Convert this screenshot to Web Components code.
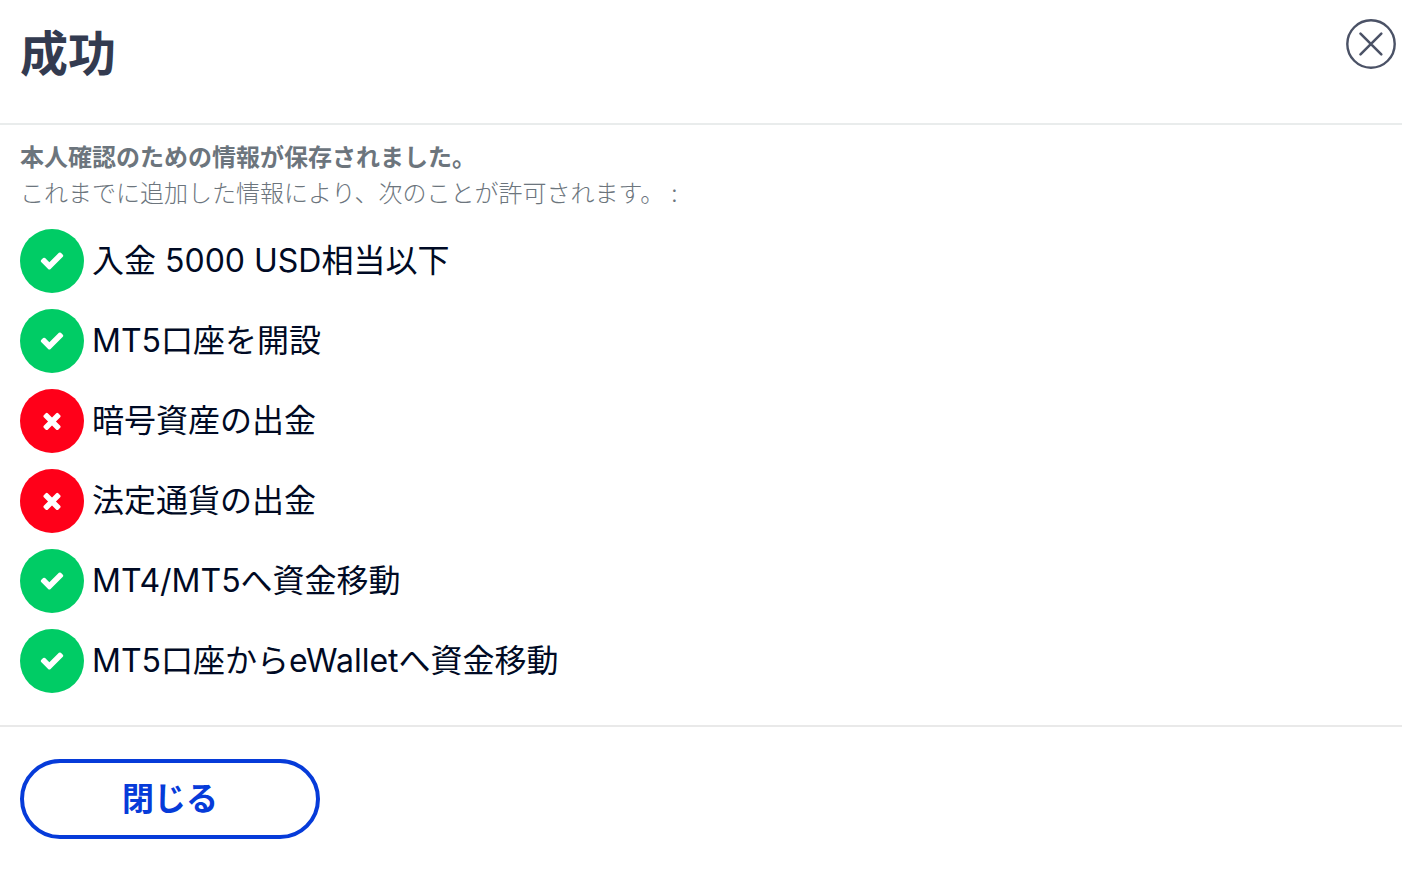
<!DOCTYPE html>
<html lang="ja">
<head>
<meta charset="utf-8">
<meta name="viewport" content="width=device-width, initial-scale=1">
<title>成功</title>
<style>
    body {
        margin: 0;
        background: #fff;
        font-family: Inter, "Noto Sans CJK JP", sans-serif;
    }
    strong {
        font-weight: 700;
    }
</style>
</head>
<body>

<result-dialog>
    <span slot="title">成功</span>
    <strong slot="summary">本人確認のための情報が保存されました。</strong>
    <span slot="detail">これまでに追加した情報により、次のことが許可されます。 :</span>
    <permission-item status="allowed">入金 5000 USD相当以下</permission-item>
    <permission-item status="allowed">MT5口座を開設</permission-item>
    <permission-item status="denied">暗号資産の出金</permission-item>
    <permission-item status="denied">法定通貨の出金</permission-item>
    <permission-item status="allowed">MT4/MT5へ資金移動</permission-item>
    <permission-item status="allowed">MT5口座からeWalletへ資金移動</permission-item>
    <pill-button slot="actions">閉じる</pill-button>
</result-dialog>

<script>
const dialogTemplate = document.createElement('template');
dialogTemplate.innerHTML = `
<style>
    :host {
        display: block;
    }
    header {
        display: flex;
        justify-content: space-between;
        align-items: flex-start;
        padding: 18px 4px 33px 20px;
        border-bottom: 2px solid #e9ecec;
    }
    h1 {
        margin: 0;
        font-size: 48px;
        line-height: 72px;
        font-weight: 700;
        color: #333b50;
    }
    .message {
        margin: 0;
        padding: 15px 20px 0;
        font-size: 24px;
        line-height: 36px;
        font-weight: 300;
        color: #6c757d;
    }
    .message slot {
        display: block;
    }
    .permissions {
        display: flex;
        flex-direction: column;
        gap: 16px;
        padding: 17px 20px 32px;
    }
    footer {
        padding: 32px 20px;
        border-top: 2px solid #e9e9e9;
    }
</style>

<section role="dialog" aria-labelledby="title">
    <header>
        <h1 id="title"><slot name="title"></slot></h1>
        <close-button></close-button>
    </header>
    <p class="message">
        <slot name="summary"></slot>
        <slot name="detail"></slot>
    </p>
    <div class="permissions" role="list"><slot></slot></div>
    <footer><slot name="actions"></slot></footer>
</section>
`;

class ResultDialog extends HTMLElement {

    constructor() {
        super();
        this.attachShadow({ mode: 'open' });
        this.shadowRoot.appendChild(dialogTemplate.content.cloneNode(true));
    }

    connectedCallback() {
        const close = () => { this.style.display = 'none'; };
        this.shadowRoot.querySelector('close-button').addEventListener('click', close);
        this.shadowRoot.querySelector('slot[name="actions"]').addEventListener('click', close);
    }
}

const closeButtonTemplate = document.createElement('template');
closeButtonTemplate.innerHTML = `
<style>
    :host {
        display: block;
    }
    button {
        display: block;
        padding: 0;
        border: 0;
        background: none;
        color: #4b5266;
        cursor: pointer;
    }
    svg {
        display: block;
    }
</style>

<button type="button" aria-label="閉じる">
    <svg width="54" height="52" viewBox="0 0 54 52" fill="none" stroke="currentColor" stroke-linecap="round">
        <circle cx="27" cy="26" r="23.7" stroke-width="2.4"/>
        <path d="M16.5 15.7l20.8 20.6M37.3 15.7L16.5 36.3" stroke-width="2.6"/>
    </svg>
</button>
`;

class CloseButton extends HTMLElement {

    constructor() {
        super();
        this.attachShadow({ mode: 'open' });
        this.shadowRoot.appendChild(closeButtonTemplate.content.cloneNode(true));
    }
}

const itemTemplate = document.createElement('template');
itemTemplate.innerHTML = `
<style>
    :host {
        display: flex;
        align-items: center;
        gap: 8px;
        font-size: 32px;
        line-height: 48px;
        font-weight: 400;
        color: #000a24;
    }
    .badge {
        flex: none;
        display: grid;
        place-items: center;
        width: 64px;
        height: 64px;
        border-radius: 50%;
        background: #00cc65;
    }
    :host([status="denied"]) .badge {
        background: #ff0019;
    }
</style>

<span class="badge">
    <svg width="26" height="26" viewBox="0 32 1792 1792" fill="#fff" aria-hidden="true"></svg>
</span>
<span><slot></slot></span>
`;

const STATUS_ICONS = {
    allowed: '<path d="M1671 566q0 40-28 68l-724 724-136 136q-28 28-68 28t-68-28l-136-136-362-362q-28-28-28-68t28-68l136-136q28-28 68-28t68 28l294 295 656-657q28-28 68-28t68 28l136 136q28 28 28 68z"/>',
    denied: '<path d="M1490 1322q0 40-28 68l-136 136q-28 28-68 28t-68-28l-294-294-294 294q-28 28-68 28t-68-28l-136-136q-28-28-28-68t28-68l294-294-294-294q-28-28-28-68t28-68l136-136q28-28 68-28t68 28l294 294 294-294q28-28 68-28t68 28l136 136q28 28 28 68t-28 68l-294 294 294 294q28 28 28 68z"/>'
};

class PermissionItem extends HTMLElement {

    constructor() {
        super();
        this.attachShadow({ mode: 'open' });
        this.shadowRoot.appendChild(itemTemplate.content.cloneNode(true));
    }

    connectedCallback() {
        this.setAttribute('role', 'listitem');
        this.shadowRoot.querySelector('svg').innerHTML = STATUS_ICONS[this.getAttribute('status')];
    }
}

const pillTemplate = document.createElement('template');
pillTemplate.innerHTML = `
<style>
    :host {
        display: inline-block;
        vertical-align: top;
    }
    button {
        display: block;
        min-width: 300px;
        padding: 12px 32px;
        border: 4px solid #063bd9;
        border-radius: 40px;
        background: #fff;
        color: #063bd9;
        font-family: inherit;
        font-size: 32px;
        line-height: 48px;
        font-weight: 700;
        cursor: pointer;
    }
    button:hover {
        background: #f0f4ff;
    }
</style>

<button type="button"><slot></slot></button>
`;

class PillButton extends HTMLElement {

    constructor() {
        super();
        this.attachShadow({ mode: 'open' });
        this.shadowRoot.appendChild(pillTemplate.content.cloneNode(true));
    }
}

window.customElements.define('close-button', CloseButton);
window.customElements.define('permission-item', PermissionItem);
window.customElements.define('pill-button', PillButton);
window.customElements.define('result-dialog', ResultDialog);
</script>
</body>
</html>
